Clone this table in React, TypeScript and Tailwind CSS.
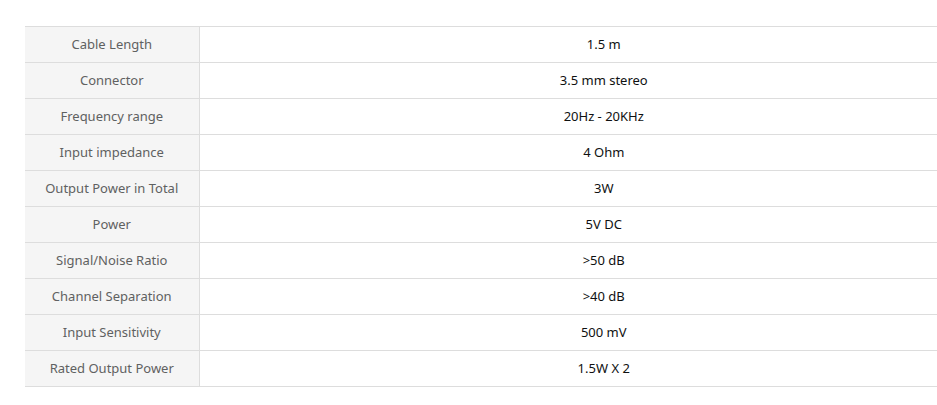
import React from 'react';

const specs = [
  { label: 'Cable Length', value: '1.5 m' },
  { label: 'Connector', value: '3.5 mm stereo' },
  { label: 'Frequency range', value: '20Hz - 20KHz' },
  { label: 'Input impedance', value: '4 Ohm' },
  { label: 'Output Power in Total', value: '3W' },
  { label: 'Power', value: '5V DC' },
  { label: 'Signal/Noise Ratio', value: '>50 dB' },
  { label: 'Channel Separation', value: '>40 dB' },
  { label: 'Input Sensitivity', value: '500 mV' },
  { label: 'Rated Output Power', value: '1.5W X 2' },
];

const App: React.FC = () => {
  return (
    <div className="min-h-[405px] w-[937px] overflow-hidden bg-white pt-[26px] pl-[25px] font-['Noto_Sans',sans-serif] text-[13px]">
      <table className="w-[983px] border-collapse">
        <tbody>
          {specs.map((row) => (
            <tr key={row.label} className="h-[36px] border-t border-b border-[#dddddd]">
              <td className="w-[174px] border-r border-[#dddddd] bg-[#f5f5f5] text-center text-[#5f6161]">
                {row.label}
              </td>
              <td className="text-center text-[#0f1111]">{row.value}</td>
            </tr>
          ))}
        </tbody>
      </table>
    </div>
  );
};

export default App;
